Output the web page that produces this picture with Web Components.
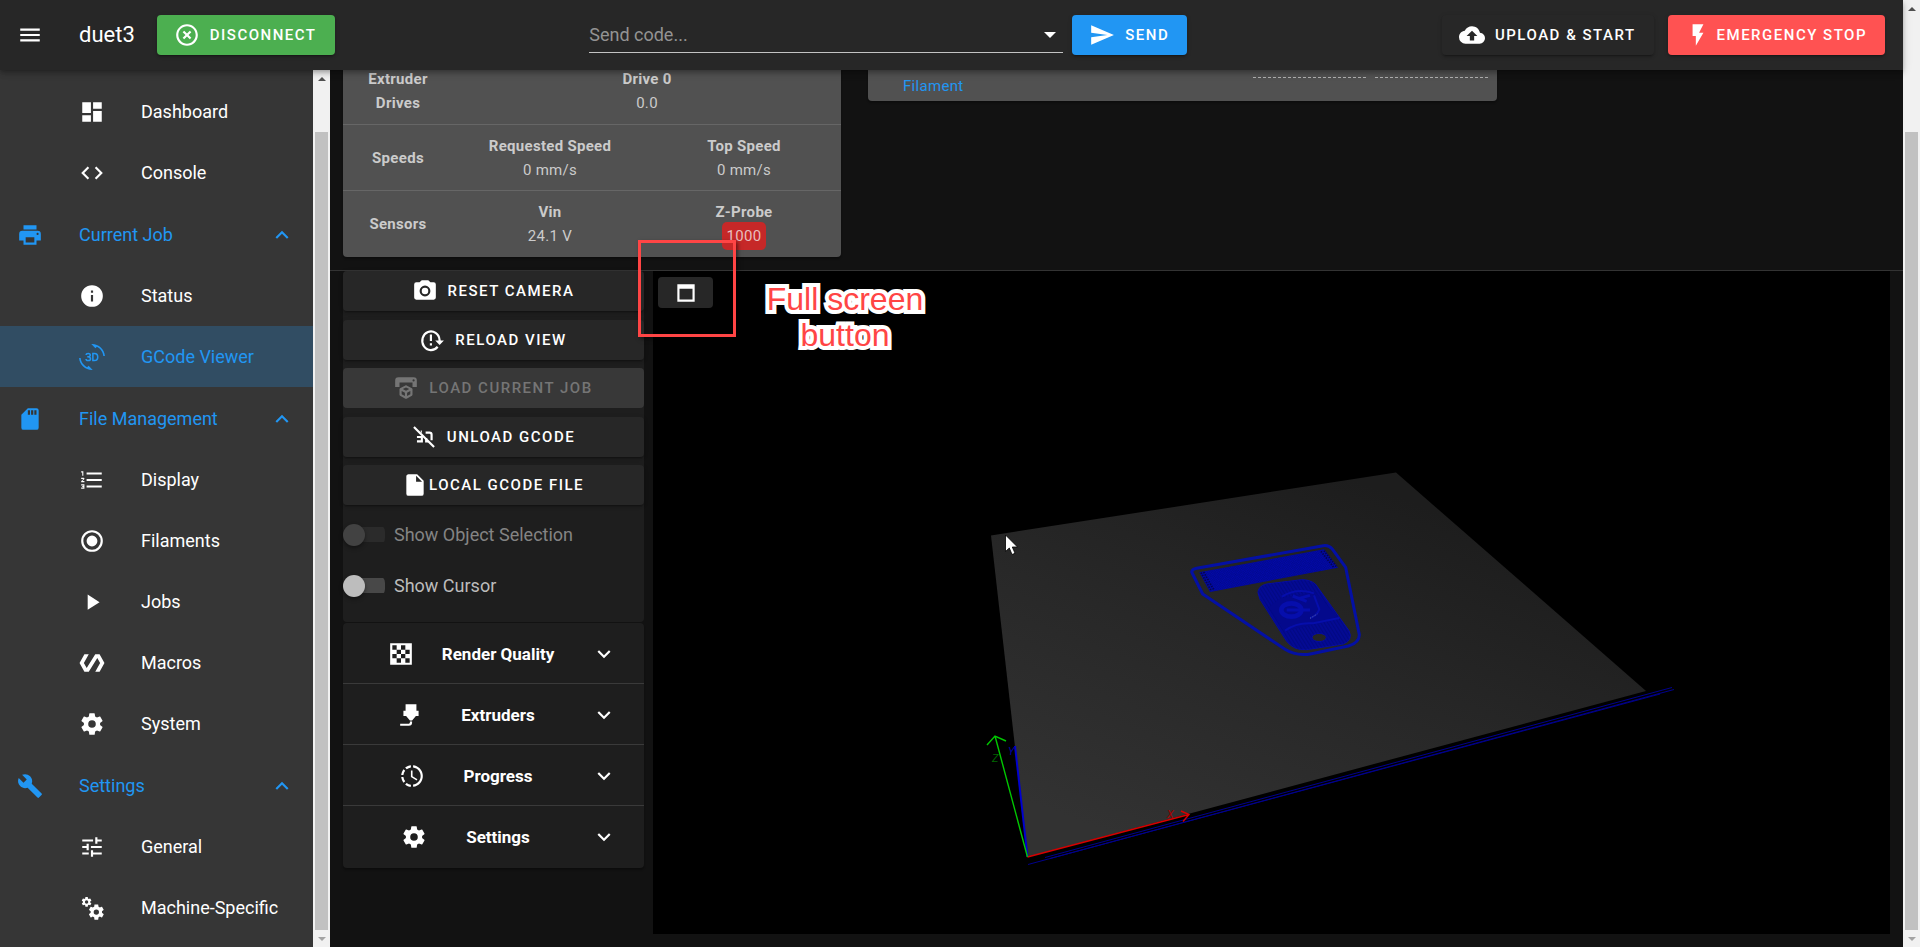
<!DOCTYPE html>
<html lang="en">
<head>
<meta charset="utf-8">
<title>duet3</title>
<style>
html, body { margin: 0; height: 100%; background: #121212; }
body { font-family: Roboto, "Liberation Sans", sans-serif; font-size: 18px; color: #fff; overflow: hidden; }
</style>
</head>
<body>
<duet-app></duet-app>
<script>
const COG = 'M12,15.5A3.5,3.5 0 0,1 8.5,12A3.5,3.5 0 0,1 12,8.5A3.5,3.5 0 0,1 15.5,12A3.5,3.5 0 0,1 12,15.5M19.43,12.97C19.47,12.65 19.5,12.33 19.5,12C19.5,11.67 19.47,11.34 19.43,11L21.54,9.37C21.73,9.22 21.78,8.95 21.66,8.73L19.66,5.27C19.54,5.05 19.27,4.96 19.05,5.05L16.56,6.05C16.04,5.66 15.5,5.32 14.87,5.07L14.5,2.42C14.46,2.18 14.25,2 14,2H10C9.75,2 9.54,2.18 9.5,2.42L9.13,5.07C8.5,5.32 7.96,5.66 7.44,6.05L4.95,5.05C4.73,4.96 4.46,5.05 4.34,5.27L2.34,8.73C2.21,8.95 2.27,9.22 2.46,9.37L4.57,11C4.53,11.34 4.5,11.67 4.5,12C4.5,12.33 4.53,12.65 4.57,12.97L2.46,14.63C2.27,14.78 2.21,15.05 2.34,15.27L4.34,18.73C4.46,18.95 4.73,19.03 4.95,18.95L7.44,17.94C7.96,18.34 8.5,18.68 9.13,18.93L9.5,21.58C9.54,21.82 9.75,22 10,22H14C14.25,22 14.46,21.82 14.5,21.58L14.87,18.93C15.5,18.67 16.04,18.34 16.56,17.94L19.05,18.95C19.27,19.03 19.54,18.95 19.66,18.73L21.66,15.27C21.78,15.05 21.73,14.78 21.54,14.63L19.43,12.97Z';
const p = d => `<path d="${d}"/>`;
const ICONS = {
  menu: p('M3,6H21V8H3V6M3,11H21V13H3V11M3,16H21V18H3V16Z'),
  'close-circle': p('M12,20C7.59,20 4,16.41 4,12C4,7.59 7.59,4 12,4C16.41,4 20,7.59 20,12C20,16.41 16.41,20 12,20M12,2C6.47,2 2,6.47 2,12C2,17.53 6.47,22 12,22C17.53,22 22,17.53 22,12C22,6.47 17.53,2 12,2M14.59,8L12,10.59L9.41,8L8,9.41L10.59,12L8,14.59L9.41,16L12,13.41L14.59,16L16,14.59L13.41,12L16,9.41L14.59,8Z'),
  send: p('M2,21L23,12L2,3V10L17,12L2,14V21Z'),
  'cloud-upload': p('M14,13V17H10V13H7L12,8L17,13M19.35,10.03C18.67,6.59 15.64,4 12,4C9.11,4 6.6,5.64 5.35,8.03C2.34,8.36 0,10.9 0,14A6,6 0 0,0 6,20H19A5,5 0 0,0 24,15C24,12.36 21.95,10.22 19.35,10.03Z'),
  flash: p('M7,2V13H10V22L17,10H13L17,2H7Z'),
  dashboard: p('M13,3V9H21V3M13,21H21V11H13M3,21H11V15H3M3,13H11V3H3V13Z'),
  code: p('M14.6,16.6L19.2,12L14.6,7.4L16,6L22,12L16,18L14.6,16.6M9.4,16.6L4.8,12L9.4,7.4L8,6L2,12L8,18L9.4,16.6Z'),
  printer: p('M18,3H6V7H18M19,12A1,1 0 0,1 18,11A1,1 0 0,1 19,10A1,1 0 0,1 20,11A1,1 0 0,1 19,12M16,19H8V14H16M19,8H5A3,3 0 0,0 2,11V17H6V21H18V17H22V11A3,3 0 0,0 19,8Z'),
  up: p('M7.41,15.41L12,10.83L16.59,15.41L18,14L12,8L6,14L7.41,15.41Z'),
  down: p('M7.41,8.58L12,13.17L16.59,8.58L18,10L12,16L6,10L7.41,8.58Z'),
  info: p('M13,9H11V7H13M13,17H11V11H13M12,2A10,10 0 0,0 2,12A10,10 0 0,0 12,22A10,10 0 0,0 22,12A10,10 0 0,0 12,2Z'),
  rotate: p('M7.52 21.48C4.25 19.94 1.91 16.76 1.55 13H.05C.56 19.16 5.71 24 12 24l.66-.03-3.81-3.81-1.33 1.32zM12 0l-.66.03 3.81 3.81 1.33-1.33c3.27 1.55 5.61 4.72 5.96 8.48h1.5C23.44 4.84 18.29 0 12 0z') +
    '<g fill="none" stroke="currentColor" stroke-width="1.4"><path d="M6.5 10.1C6.6 8.2 10.5 8.2 10.4 10.3C10.4 11.6 9.2 11.8 7.6 11.8C9.4 11.8 10.6 12.3 10.6 13.5C10.6 15.9 6.6 15.8 6.5 13.8"/><path d="M12.8 8.7V15.3H14.2C16.2 15.3 17.3 14.2 17.3 12S16.2 8.7 14.2 8.7Z"/></g>',
  sd: p('M18,8H16V4H18M15,8H13V4H15M12,8H10V4H12M18,2H10L4,8V20A2,2 0 0,0 6,22H18A2,2 0 0,0 20,20V4A2,2 0 0,0 18,2Z'),
  list: p('M7,13V11H21V13H7M7,19V17H21V19H7M7,7V5H21V7H7M3,8V5H2V4H4V8H3M2,17V16H5V20H2V19H4V18.5H3V17.5H4V17H2M4.25,10A0.75,0.75 0 0,1 5,10.75C5,10.95 4.92,11.14 4.79,11.27L3.12,13H5V14H2V13.08L4,11H2V10H4.25Z'),
  radio: p('M12,20A8,8 0 0,1 4,12A8,8 0 0,1 12,4A8,8 0 0,1 20,12A8,8 0 0,1 12,20M12,2A10,10 0 0,0 2,12A10,10 0 0,0 12,22A10,10 0 0,0 22,12A10,10 0 0,0 12,2M12,7A5,5 0 0,0 7,12A5,5 0 0,0 12,17A5,5 0 0,0 17,12A5,5 0 0,0 12,7Z'),
  play: p('M8,5.14V19.14L19,12.14L8,5.14Z'),
  polymer: p('M19,4H15L7.1,16.63L4.5,12L9,4H5L0.5,12L5,20H9L16.89,7.37L19.5,12L15,20H19L23.5,12L19,4Z'),
  cog: p(COG),
  cogs: `<g transform="translate(1.6 1) scale(.45)">${p(COG)}</g><g transform="translate(7.6 7.4) scale(.7)">${p(COG)}</g>`,
  wrench: p('M22.7,19L13.6,9.9C14.5,7.6 14,4.9 12.1,3C10.1,1 7.1,0.6 4.7,1.7L9,6L6,9L1.6,4.7C0.4,7.1 0.9,10.1 2.9,12.1C4.8,14 7.5,14.5 9.8,13.6L18.9,22.7C19.3,23.1 19.9,23.1 20.3,22.7L22.6,20.4C23.1,20 23.1,19.3 22.7,19Z'),
  tune: p('M3,17V19H9V17H3M3,5V7H13V5H3M13,21V19H21V17H13V15H11V21H13M7,9V11H3V13H7V15H9V9H7M21,13V11H11V13H21M15,9H17V7H21V5H17V3H15V9Z'),
  camera: p('M4,4H7L9,2H15L17,4H20A2,2 0 0,1 22,6V18A2,2 0 0,1 20,20H4A2,2 0 0,1 2,18V6A2,2 0 0,1 4,4M12,7A5,5 0 0,0 7,12A5,5 0 0,0 12,17A5,5 0 0,0 17,12A5,5 0 0,0 12,7M12,9A3,3 0 0,1 15,12A3,3 0 0,1 12,15A3,3 0 0,1 9,12A3,3 0 0,1 12,9Z'),
  reload: '<path fill="none" stroke="currentColor" stroke-width="2" d="M17.2 18.2A8 8.6 0 1 1 19 12V13"/>' + p('M15,12.5H23L19,16.5ZM10,7H12V13H10ZM10,15H12V17H10Z'),
  'printer-3d': p('M19,6A1,1 0 0,0 20,5A1,1 0 0,0 19,4A1,1 0 0,0 18,5A1,1 0 0,0 19,6M19,2A3,3 0 0,1 22,5V11H18V7H6V11H2V5A3,3 0 0,1 5,2H19M18,18.25C18,18.63 17.79,18.96 17.47,19.13L12.57,21.82C12.4,21.94 12.21,22 12,22C11.79,22 11.59,21.94 11.43,21.82L6.53,19.13C6.21,18.96 6,18.63 6,18.25V13C6,12.62 6.21,12.29 6.53,12.12L11.43,9.68C11.59,9.56 11.79,9.5 12,9.5C12.21,9.5 12.4,9.56 12.57,9.68L17.47,12.12C17.79,12.29 18,12.62 18,13V18.25M12,11.65L9.04,13L12,14.6L14.96,13L12,11.65M8,17.66L11,19.29V16.33L8,14.71V17.66M16,17.66V14.71L13,16.33V19.29L16,17.66Z'),
  'off-3d': '<g fill="none" stroke="currentColor" stroke-width="2"><path d="M2.7 2.7L21.3 21.3"/><path d="M5.500 12H10M5.500 16H10V11M9 7H10M13.500 8H17A2 2 0 0 1 19 10V15M14 13V16H16"/></g>',
  file: p('M13,9V3.5L18.5,9M6,2C4.89,2 4,2.89 4,4V20A2,2 0 0,0 6,22H18A2,2 0 0,0 20,20V8L14,2H6Z'),
  checker: p('M2,2H22V22H2ZM4,4V8H8V4ZM12,4V8H16V4ZM8,8V12H12V8ZM16,8V12H20V8ZM4,12V16H8V12ZM12,12V16H16V12ZM8,16V20H12V16ZM16,16V20H20V16Z'),
  nozzle: p('M7,2H17V8H19V13H16.5L13,17H11L7.5,13H5V8H7V2M10,22H2V20H10A1,1 0 0,0 11,19V18H13V19A3,3 0 0,1 10,22Z'),
  progress: p('M13,2.03V2.05L13,4.05C17.39,4.59 20.5,8.58 19.96,12.97C19.5,16.61 16.64,19.5 13,19.93V21.93C18.5,21.38 22.5,16.5 21.95,11C21.5,6.25 17.73,2.5 13,2.03M11,2.06C9.05,2.25 7.19,3 5.67,4.26L7.1,5.74C8.22,4.84 9.57,4.26 11,4.06V2.06M4.26,5.67C3,7.19 2.25,9.04 2.05,11H4.05C4.24,9.58 4.8,8.23 5.69,7.1L4.26,5.67M2.06,13C2.26,14.96 3.03,16.81 4.27,18.33L5.69,16.9C4.81,15.77 4.24,14.42 4.06,13H2.06M7.1,18.37L5.67,19.74C7.18,21 9.04,21.79 11,22V20C9.58,19.82 8.23,19.25 7.1,18.37M12.5,7V12.25L17,14.92L16.25,16.15L11,13V7H12.5Z'),
  window: p('M4,4H20V20H4V4M6,8V18H18V8H6Z')
};

function define(name, render) {
  customElements.define(name, class extends HTMLElement {
    constructor() { super(); this.attachShadow({ mode: 'open' }); }
    connectedCallback() { this.shadowRoot.innerHTML = render(this); }
  });
}

define('ui-icon', el => `
<style>:host{display:block;flex:none;width:26px;height:26px}svg{display:block;width:100%;height:100%;fill:currentColor;fill-rule:evenodd}</style>
<svg viewBox="0 0 24 24" aria-hidden="true">${ICONS[el.getAttribute('name')]}</svg>`);

define('ui-button', el => `
<style>
:host{display:block;flex:none}
button{box-sizing:border-box;display:flex;align-items:center;justify-content:center;gap:var(--gap,10px);width:100%;height:40px;padding:0 18px 0 17px;border:0;border-radius:4px;
 background:var(--bg,#272727);color:#fff;font:500 15px/20px Roboto,"Liberation Sans",sans-serif;letter-spacing:.1em;text-transform:uppercase;white-space:nowrap;
 box-shadow:0 3px 1px -2px rgba(0,0,0,.2),0 2px 2px rgba(0,0,0,.14),0 1px 5px rgba(0,0,0,.12)}
button:disabled{background:#383838;color:#757575;box-shadow:none}
</style>
<button type="button" ${el.hasAttribute('disabled') ? 'disabled' : ''}><ui-icon name="${el.getAttribute('icon')}"></ui-icon><slot></slot></button>`);

define('scroll-track', () => `
<style>
:host{display:flex;flex:none;flex-direction:column;align-items:center;box-sizing:border-box;width:17px;background:#f1f1f1}
i{flex:none;display:flex;align-items:center;justify-content:center;width:17px;height:17px}
i::before{content:"";border:4px solid transparent;border-top:0;border-bottom-color:#505050}
i.down::before{border:4px solid transparent;border-bottom:0;border-top-color:#a3a3a3}
span{flex:1;width:13px;margin-top:var(--start,45px);background:#c1c1c1}
</style><i></i><span></span><i class="down"></i>`);

define('app-header', () => `
<style>
:host{display:block;position:relative;z-index:2;background:#272727;box-shadow:0 2px 4px -1px rgba(0,0,0,.2),0 4px 5px rgba(0,0,0,.14),0 1px 10px rgba(0,0,0,.12)}
header{display:flex;align-items:center;height:70px;padding:0 18px 0 17px}
.menu{display:flex;padding:0;border:0;background:none;color:#fff}
h1{margin:0 22px 0 36px;font-size:22px;font-weight:400;line-height:30px}
.grow{flex:1}
.combo{display:flex;align-items:center;box-sizing:border-box;flex:0 1 474px;height:36px;margin-right:9px;border-bottom:1px solid #c3c3c3}
input{flex:1;min-width:0;padding:0;border:0;outline:0;background:none;color:#fff;font:18px/24px Roboto,"Liberation Sans",sans-serif}
input::placeholder{color:#939393;opacity:1}
.combo button{width:26px;height:26px;padding:0;border:0;background:none;display:flex;align-items:center;justify-content:center}
.combo button::before{content:"";border:6px solid transparent;border-top-color:#fff;border-bottom:0}
.upload{margin-right:14px}
</style>
<header>
 <button class="menu" type="button" aria-label="Menu"><ui-icon name="menu"></ui-icon></button>
 <h1>duet3</h1>
 <ui-button icon="close-circle" style="--bg:#4caf50">Disconnect</ui-button>
 <div class="grow"></div>
 <div class="combo"><input type="text" placeholder="Send code..." aria-label="Send code"><button type="button" aria-label="Recent codes"></button></div>
 <ui-button icon="send" style="--bg:#2196f3">Send</ui-button>
 <div class="grow"></div>
 <ui-button class="upload" icon="cloud-upload">Upload &amp; Start</ui-button>
 <ui-button icon="flash" style="--bg:#ff5252;--gap:6px">Emergency Stop</ui-button>
</header>`);

define('nav-item', el => `
<style>
:host{display:block}
a{display:flex;align-items:center;height:61px;padding:0 18px 0 79px;color:#fff;text-decoration:none;line-height:24px;white-space:nowrap}
a span{margin-left:36px}
:host([group]) a{padding-left:17px;color:#2196f3}
:host([group]) a span{flex:1}
:host([active]) a{background:#314d63;color:#2196f3}
</style>
<a href="#"><ui-icon name="${el.getAttribute('icon')}"></ui-icon><span><slot></slot></span>${el.hasAttribute('group') ? '<ui-icon name="up"></ui-icon>' : ''}</a>`);

define('side-nav', () => `
<style>
:host{display:flex;flex:none;width:330px;background:#363636}
nav{display:flex;flex-direction:column;gap:1px;flex:1;padding-top:11px}
</style>
<nav aria-label="Main">
 <div><nav-item icon="dashboard">Dashboard</nav-item><nav-item icon="code">Console</nav-item></div>
 <div><nav-item group icon="printer">Current Job</nav-item><nav-item icon="info">Status</nav-item><nav-item active icon="rotate">GCode Viewer</nav-item></div>
 <div><nav-item group icon="sd">File Management</nav-item><nav-item icon="list">Display</nav-item><nav-item icon="radio">Filaments</nav-item><nav-item icon="play">Jobs</nav-item><nav-item icon="polymer">Macros</nav-item><nav-item icon="cog">System</nav-item></div>
 <div><nav-item group icon="wrench">Settings</nav-item><nav-item icon="tune">General</nav-item><nav-item icon="cogs">Machine-Specific</nav-item></div>
</nav>
<scroll-track></scroll-track>`);

define('status-card', () => `
<style>
:host{display:block;background:#515151;border-radius:0 0 4px 4px;overflow:hidden;box-shadow:0 2px 2px rgba(0,0,0,.3)}
table{width:100%;border-collapse:separate;border-spacing:0;table-layout:fixed;color:#cbcbcb;font-size:15px;line-height:24px;letter-spacing:.02em;text-align:center}
col.label{width:110px}
th,td{box-sizing:border-box;height:66px;padding:0}
th{font-weight:700}
tr+tr>*{border-top:1px solid #666}
tr:last-child>*{height:67px}
strong,span{display:block}
mark{display:inline-block;margin:-2px 0;padding:2px 5px;border-radius:5px;background:#c62828;color:#e8bebe}
</style>
<table>
<colgroup><col class="label"><col><col></colgroup>
<tr><th scope="row">Extruder<br>Drives</th><td colspan="2"><strong>Drive 0</strong><span>0.0</span></td></tr>
<tr><th scope="row">Speeds</th><td><strong>Requested Speed</strong><span>0 mm/s</span></td><td><strong>Top Speed</strong><span>0 mm/s</span></td></tr>
<tr><th scope="row">Sensors</th><td><strong>Vin</strong><span>24.1 V</span></td><td><strong>Z-Probe</strong><span><mark>1000</mark></span></td></tr>
</table>`);

define('tools-card', () => `
<style>
:host{display:flex;align-items:flex-start;justify-content:space-between;box-sizing:border-box;height:43px;padding:0 9px 0 35px;background:#515151;border-radius:0 0 4px 4px;box-shadow:0 2px 2px rgba(0,0,0,.3)}
a{margin-top:16px;color:#2196f3;font-size:15px;line-height:24px;letter-spacing:.02em;text-decoration:none}
div{display:flex;gap:9px;flex:0 1 235px;min-width:0}
input{box-sizing:border-box;flex:1;min-width:0;height:20px;padding:0;border:0;border-bottom:1px dashed #b0b0b0;background:none;color:#fff}
</style>
<a href="#">Filament</a><div><input type="text" aria-label="Active temperature"><input type="text" aria-label="Standby temperature"></div>`);

define('ui-switch', el => `
<style>
:host{display:block}
label{display:flex;align-items:center;gap:9px;height:51px;color:#bcbcbc;line-height:24px;white-space:nowrap}
input{appearance:none;flex:none;display:flex;align-items:center;width:42px;height:22px;margin:0;background:linear-gradient(#484848,#484848) 8px center/34px 15px no-repeat;border-radius:11px 8px 8px 11px}
input::before{content:"";width:22px;height:22px;border-radius:50%;background:#bdbdbd;box-shadow:0 2px 4px rgba(0,0,0,.4)}
:host([disabled]) label{color:#848484}
:host([disabled]) input{background-image:linear-gradient(#2b2b2b,#2b2b2b)}
:host([disabled]) input::before{background:#424242}
</style>
<label><input type="checkbox" role="switch" ${el.hasAttribute('disabled') ? 'disabled' : ''}><slot></slot></label>`);

define('expansion-row', el => `
<style>
:host{display:block}
button{box-sizing:border-box;display:flex;align-items:center;width:100%;height:61px;padding:0 27px 0 26px;border:0;background:none;color:#fff;font:700 17px/24px Roboto,"Liberation Sans",sans-serif}
.icon{display:flex;justify-content:center;flex:1 1 36px}
.text{flex:none;padding:0 8px;white-space:nowrap}
.rest{flex:1 1 0}
</style>
<button type="button" aria-expanded="false"><span class="icon"><ui-icon name="${el.getAttribute('icon')}"></ui-icon></span><span class="text"><slot></slot></span><span class="rest"></span><ui-icon name="down"></ui-icon></button>`);

define('viewer-controls', () => `
<style>
:host{display:block;flex:none;width:301px}
.top{background:#1e1e1e;border-radius:4px}
.buttons{display:flex;flex-direction:column;justify-content:space-between;min-height:234px}
.switches{padding:4px 0 11px}
.panels{background:#1e1e1e;border-radius:4px;margin-top:1px;padding-bottom:1px;box-shadow:0 2px 2px rgba(0,0,0,.3)}
.panels expansion-row+expansion-row{box-shadow:0 -1px #3a3a3a}
</style>
<div class="top">
 <div class="buttons">
  <ui-button icon="camera">Reset Camera</ui-button>
  <ui-button icon="reload">Reload View</ui-button>
  <ui-button icon="printer-3d" disabled>Load Current Job</ui-button>
  <ui-button icon="off-3d">Unload GCode</ui-button>
  <ui-button icon="file" style="--gap:1px">Local GCode File</ui-button>
 </div>
 <div class="switches"><ui-switch disabled>Show Object Selection</ui-switch><ui-switch>Show Cursor</ui-switch></div>
</div>
<div class="panels">
 <expansion-row icon="checker">Render Quality</expansion-row>
 <expansion-row icon="nozzle">Extruders</expansion-row>
 <expansion-row icon="progress">Progress</expansion-row>
 <expansion-row icon="cog">Settings</expansion-row>
</div>`);

define('viewer-scene', () => `
<style>:host{display:block}svg{display:block;width:100%;height:100%}</style>
<svg viewBox="653 271 1237 663" preserveAspectRatio="xMidYMid meet" role="img" aria-label="Print bed">
<defs>
 <linearGradient id="bed" gradientUnits="userSpaceOnUse" x1="1330" y1="470" x2="1180" y2="860"><stop offset="0" stop-color="#1d1d1d"/><stop offset=".5" stop-color="#282828"/><stop offset="1" stop-color="#323232"/></linearGradient>
 <pattern id="mesh" width="7" height="7" patternUnits="userSpaceOnUse" patternTransform="rotate(-12)"><path d="M0 0L7 7M7 0L0 7" stroke="#000a78" stroke-width="1"/></pattern>
 <pattern id="hatch" width="9" height="9" patternUnits="userSpaceOnUse" patternTransform="rotate(-32)"><path d="M2 0V9" stroke="#00066e" stroke-width="3"/></pattern>
</defs>
<path d="M991 535.5L1396 472.5L1646 691L1027.5 857Z" fill="url(#bed)"/>
<g transform="translate(1170 530) scale(.33333)" stroke-linejoin="round">
 <path d="M65 126Q66 118 80 115L460 47Q476 45 486 56L527 112L568 314Q568 338 535 348L425 371Q380 380 345 358L98 192Z" fill="none" stroke="#0410a4" stroke-width="9"/>
 <path d="M88 127L462 58L504 113L120 186Z" fill="#0309a8"/><path d="M88 127L462 58L504 113L120 186Z" fill="url(#mesh)"/>
 <path d="M93 128L124 183M101 126L132 181M453 64L492 113M462 62L500 111" stroke="#05054a" stroke-width="5" stroke-dasharray="4 4" fill="none"/>
 <path fill-rule="evenodd" d="M264 188Q264 168 290 162L395 149Q420 149 436 162L537 302Q550 330 520 342L410 359Q372 362 350 334L270 208ZM426 323A21 12 0 1 0 469 322A21 12 0 1 0 426 323Z" fill="#040a94" stroke="#050ca8" stroke-width="3"/>
 <path fill-rule="evenodd" d="M264 188Q264 168 290 162L395 149Q420 149 436 162L537 302Q550 330 520 342L410 359Q372 362 350 334L270 208ZM426 323A21 12 0 1 0 469 322A21 12 0 1 0 426 323Z" fill="url(#hatch)" opacity=".55"/>
 <path d="M296 232L330 205L436 186L508 266L345 302Z" fill="#04098c"/>
 <g fill="none" stroke="#060eac">
  <path d="M336 200Q380 172 432 190M345 302Q380 276 430 280L508 264M432 196L448 238Q440 258 420 264" stroke-width="6"/>
  <ellipse cx="364" cy="240" rx="30" ry="20" stroke-width="14"/>
  <path d="M368 198L410 214M350 240H420M385 206L420 196" stroke-width="9"/>
 </g>
 <path d="M420 265L442 252" stroke="#5560a0" stroke-width="3" stroke-dasharray="4 4"/>
</g>
<g fill="none" stroke="#00008c" stroke-width="1">
 <path d="M1028 864.5L1674 689.5M1045 857.5L1672 687.5M1050 858.5L1660 694"/>
</g>
<g fill="none" stroke-width="1.4">
 <path d="M1027.5 857L1015 746" stroke="#0000d0" stroke-width="2"/>
 <path d="M1027.5 857L1189 814.5M1181 811L1189 814.5L1183 821.5" stroke="#d80000"/>
 <path d="M1027.5 857L995 736M987 745L995 736L1006 741" stroke="#00c800"/>
</g>
<g font-family="Roboto, sans-serif" font-size="11" font-style="italic">
 <text x="992" y="762" fill="#006a00">Z</text><text x="1008" y="755" fill="#0000a0">Y</text><text x="1167" y="818" fill="#a00000">X</text>
</g>
<path d="M1005.5 535V551.5L1009.3 548L1012 554.5L1015 553.3L1012.3 547H1017.5Z" fill="#fff" stroke="#000" stroke-width=".8"/>
</svg>`);

define('viewer-canvas', () => `
<style>
:host{display:block;position:relative;flex:1;min-width:0;background:#000}
viewer-scene{height:100%}
button{position:absolute;left:5px;top:6px;display:flex;align-items:center;justify-content:center;width:55px;height:31px;padding:0;border:0;border-radius:4px;background:#272727;color:#fff}
.frame{position:absolute;left:-15px;top:-31px;box-sizing:border-box;width:98px;height:97px;border:3px solid #ff4545;box-shadow:2px 2px 4px rgba(0,0,0,.5)}
p{position:absolute;left:107px;top:10px;width:170px;margin:0;color:#ff4545;font:32px/36px "Liberation Sans",Arial,sans-serif;text-align:center;-webkit-text-stroke:8px #fff;paint-order:stroke fill;stroke-linejoin:round}
</style>
<viewer-scene></viewer-scene>
<button type="button" aria-label="Full screen"><ui-icon name="window"></ui-icon></button>
<div class="frame"></div>
<p>Full screen<br>button</p>`);

define('duet-app', () => `
<style>
:host{display:flex;height:100vh}
.page{display:flex;flex-direction:column;flex:1;min-width:0}
.body{display:flex;flex:1;min-height:0}
main{flex:1;min-width:0;display:flex;flex-direction:column;overflow:hidden}
.cards{display:grid;grid-template-columns:498fr 629fr 366fr;gap:27px;align-items:start;margin-top:-12px;padding:0 13px 13px}
.viewer{display:flex;align-items:stretch;flex:1;gap:9px;padding:0 13px;margin-bottom:13px;border-top:1px solid #333}
viewer-controls{align-self:flex-start}
</style>
<div class="page">
 <app-header></app-header>
 <div class="body">
  <side-nav></side-nav>
  <main>
   <div class="cards"><status-card></status-card><tools-card></tools-card></div>
   <div class="viewer"><viewer-controls></viewer-controls><viewer-canvas></viewer-canvas></div>
  </main>
 </div>
</div>
<scroll-track style="--start:115px"></scroll-track>`);
</script>
</body>
</html>
